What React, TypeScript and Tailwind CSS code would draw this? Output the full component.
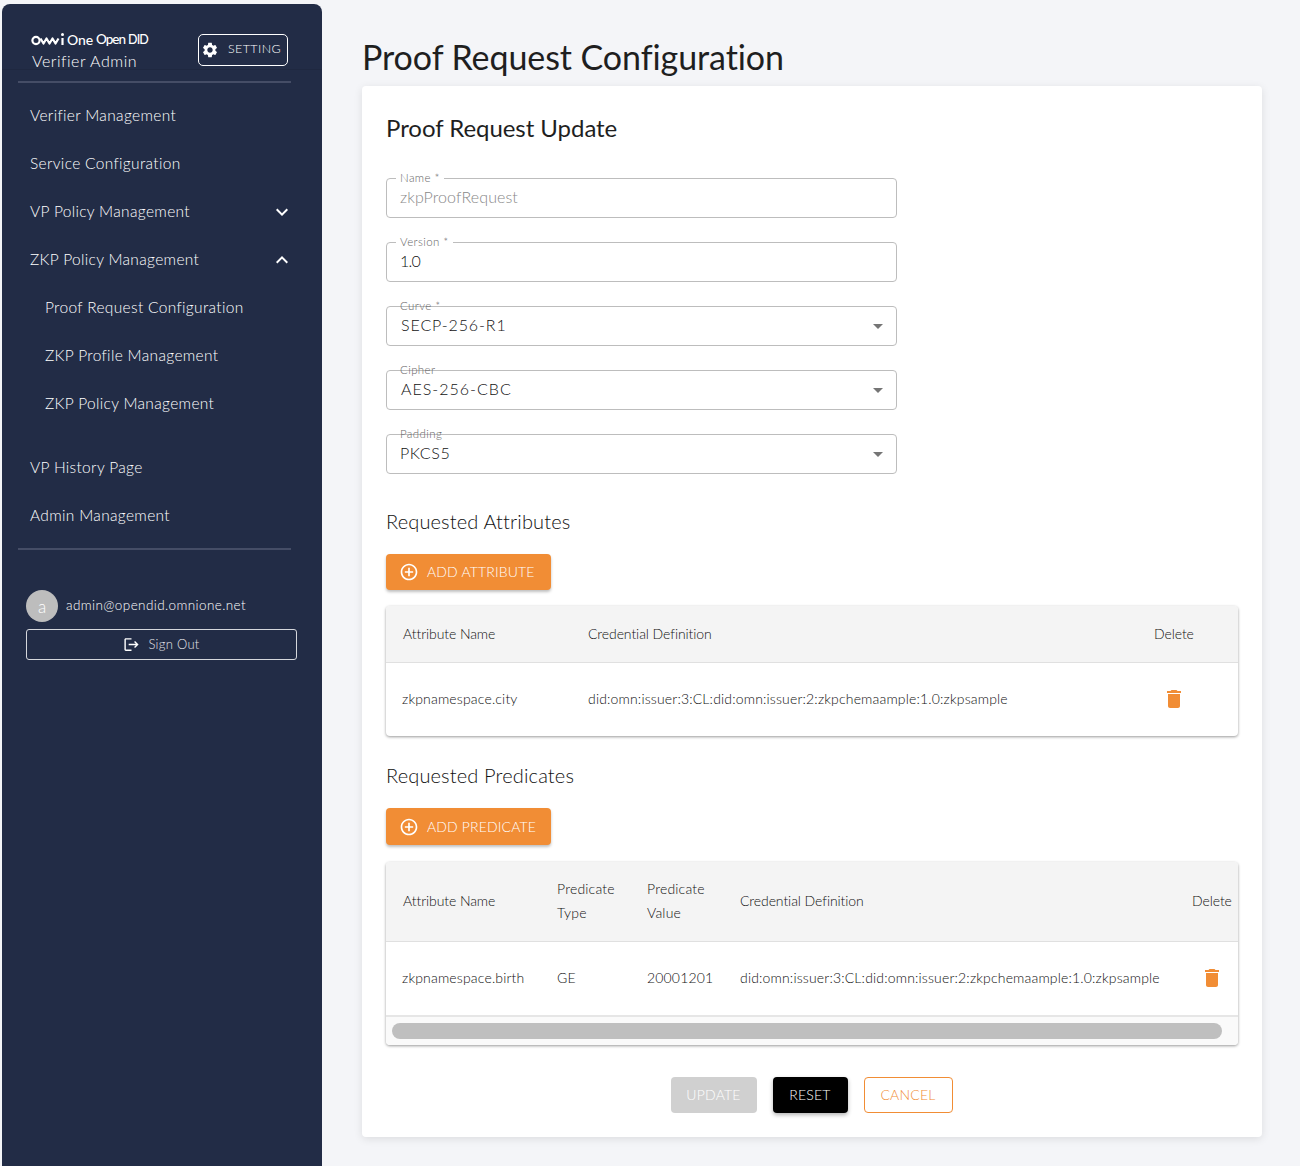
import React from "react";

const Gear = () => (
  <svg viewBox="0 0 24 24" className="w-[18px] h-[18px] fill-white shrink-0">
    <path d="M19.14 12.94c.04-.3.06-.61.06-.94 0-.32-.02-.64-.07-.94l2.03-1.58c.18-.14.23-.41.12-.61l-1.92-3.32c-.12-.22-.37-.29-.59-.22l-2.39.96c-.5-.38-1.03-.7-1.62-.94l-.36-2.54c-.04-.24-.24-.41-.48-.41h-3.84c-.24 0-.43.17-.47.41l-.36 2.54c-.59.24-1.13.57-1.62.94l-2.39-.96c-.22-.08-.47 0-.59.22L2.74 8.87c-.12.21-.08.47.12.61l2.03 1.58c-.05.3-.09.63-.09.94s.02.64.07.94l-2.03 1.58c-.18.14-.23.41-.12.61l1.92 3.32c.12.22.37.29.59.22l2.39-.96c.5.38 1.03.7 1.62.94l.36 2.54c.05.24.24.41.48.41h3.84c.24 0 .44-.17.47-.41l.36-2.54c.59-.24 1.13-.56 1.62-.94l2.39.96c.22.08.47 0 .59-.22l1.92-3.32c.12-.22.07-.47-.12-.61l-2.01-1.58zM12 15.6c-1.98 0-3.6-1.62-3.6-3.6s1.62-3.6 3.6-3.6 3.6 1.62 3.6 3.6-1.62 3.6-3.6 3.6z" />
  </svg>
);
const Chevron = ({ up }: { up?: boolean }) => (
  <svg viewBox="0 0 24 24" className="w-6 h-6 fill-white">
    <path d={up ? "M7.41 15.41 12 10.83l4.59 4.58L18 14l-6-6-6 6z" : "M7.41 8.59 12 13.17l4.59-4.58L18 10l-6 6-6-6z"} />
  </svg>
);
const Trash = () => (
  <svg viewBox="0 0 24 24" className="w-6 h-6 fill-[#f18d35]">
    <path d="M6 19c0 1.1.9 2 2 2h8c1.1 0 2-.9 2-2V7H6v12zM19 4h-3.5l-1-1h-5l-1 1H5v2h14V4z" />
  </svg>
);
const PlusCircle = () => (
  <svg viewBox="0 0 24 24" className="w-5 h-5 fill-white shrink-0">
    <path d="M13 7h-2v4H7v2h4v4h2v-4h4v-2h-4V7zm-1-5C6.48 2 2 6.48 2 12s4.48 10 10 10 10-4.48 10-10S17.52 2 12 2zm0 18c-4.41 0-8-3.59-8-8s3.59-8 8-8 8 3.59 8 8-3.59 8-8 8z" />
  </svg>
);
const Logout = () => (
  <svg viewBox="0 0 24 24" className="w-[17px] h-[17px] fill-white shrink-0">
    <path d="M17 7l-1.41 1.41L18.17 11H8v2h10.17l-2.58 2.58L17 17l5-5zM4 5h8V3H4c-1.1 0-2 .9-2 2v14c0 1.1.9 2 2 2h8v-2H4V5z" />
  </svg>
);
const OmniMark = () => (
  <svg viewBox="0 0 34 13" className="w-[34px] h-[13px] shrink-0" fill="none" stroke="#fff" strokeWidth="2.2">
    <circle cx="5" cy="7.5" r="3.6" />
    <path d="M9.5 5.5 12.5 10.5 15.5 5.5 18.5 10.5 21.5 5.5 24.5 10.5 27.5 5.5" strokeLinejoin="round" />
    <path d="M31.5 5v7" />
    <circle cx="31.5" cy="1.6" r="1.5" fill="#fff" stroke="none" />
  </svg>
);

const NavItem = ({ label, sub, icon }: { label: string; sub?: boolean; icon?: React.ReactNode }) => (
  <div className={`h-12 flex items-center justify-between text-[15.5px] font-light text-white tracking-[0.33px] pr-[28px] ${sub ? "pl-[43px]" : "pl-[28px]"}`}>
    <span>{label}</span>
    {icon}
  </div>
);

const Field = ({ label, value, notch, select, disabled, track }: { label: string; value: string; notch?: boolean; select?: boolean; disabled?: boolean; track: string }) => (
  <div className="relative w-[511px] h-10 border border-[#bdbdbd] rounded-[4px] flex items-center justify-between pl-[13px] pr-[6px] bg-white">
    <span className={`absolute left-[9px] -top-[8px] text-[11.5px] leading-[14px] px-[4px] tracking-[0.4px] font-light text-[#666] ${notch ? "bg-white" : ""}`}>{label}</span>
    <span className={`text-[16px] pb-[2px] font-light ${track} ${disabled ? "text-[#888]" : "text-[#111]"}`}>{value}</span>
    {select && (
      <svg viewBox="0 0 24 24" className="w-6 h-6 fill-[#757575]">
        <path d="M7 10l5 5 5-5z" />
      </svg>
    )}
  </div>
);

const AddButton = ({ label, tall }: { label: string; tall?: boolean }) => (
  <div className={`${tall ? "h-[37px]" : "h-9"} w-[165px] bg-[#f18d35] rounded-[4px] shadow-[0_2px_3px_rgba(0,0,0,0.25)] flex items-center pl-[13px] gap-[8px] text-white text-[14px] tracking-[0.15px] font-light`}>
    <PlusCircle />
    <span className="pb-[1px]">{label}</span>
  </div>
);

export default function App() {
  return (
    <div className="min-h-[1166px] bg-[#f4f5f8] flex items-stretch pl-[2px] pt-[4px] font-['Lato','Liberation_Sans',sans-serif] text-[#111]">
      <aside className="w-[320px] shrink-0 bg-[#222c46] rounded-t-[8px] flex flex-col">
        <div className="h-[66px] border-b border-[#1f2840] flex items-start justify-between pl-[29px] pr-[34px] pt-[30px]">
          <div className="flex flex-col text-white">
            <div className="flex items-center gap-[2px] h-[13px] mt-[-1px]">
              <OmniMark />
              <span className="text-[14px] leading-[13px] font-medium tracking-[-0.1px]">One</span>
              <span className="text-[13.5px] leading-[13px] font-medium tracking-[-1px] ml-[1px]">Open</span>
              <span className="text-[12.5px] leading-[13px] font-medium tracking-[-0.9px] ml-[1px]">DID</span>
            </div>
            <div className="text-[16px] leading-[20px] tracking-[0.52px] font-light text-white mt-[5px] ml-[1px]">Verifier Admin</div>
          </div>
          <div className="h-[32px] w-[90px] border border-white rounded-[5px] flex items-center pl-[2px] gap-[9px] text-white text-[12.5px] font-light tracking-[0.4px] shrink-0">
            <Gear />
            <span className="pb-[1px]">SETTING</span>
          </div>
        </div>
        <div className="h-[2px] bg-[#454d66] mt-[11px] ml-[16px] mr-[31px]" />
        <nav className="pt-[9px] pb-[8px]">
          <NavItem label="Verifier Management" />
          <NavItem label="Service Configuration" />
          <NavItem label="VP Policy Management" icon={<Chevron />} />
          <NavItem label="ZKP Policy Management" icon={<Chevron up />} />
          <NavItem label="Proof Request Configuration" sub />
          <NavItem label="ZKP Profile Management" sub />
          <NavItem label="ZKP Policy Management" sub />
          <div className="h-4" />
          <NavItem label="VP History Page" />
          <NavItem label="Admin Management" />
        </nav>
        <div className="h-[2px] bg-[#454d66] ml-[16px] mr-[31px]" />
        <div className="pl-[24px] pr-[25px] pt-[40px]">
          <div className="flex items-center gap-2">
            <div className="w-8 h-8 rounded-full bg-[#bdbdbd] text-white flex items-center justify-center text-[17px] pt-[2px] font-light">a</div>
            <span className="text-[13.5px] pb-[2px] font-light text-white tracking-[0.4px]">admin@opendid.omnione.net</span>
          </div>
          <div className="mt-[7px] h-[31px] border border-[#d5d7dc] rounded-[3px] flex items-center justify-center gap-[8px] text-[13px] font-light text-[#e2e4e8] tracking-[0.3px]">
            <Logout />
            <span>Sign Out</span>
          </div>
        </div>
      </aside>

      <main className="ml-[40px] w-[900px]">
        <h1 className="text-[34px] leading-[44px] font-normal tracking-[-0.08px] text-[#1f1f1f] mt-[31px] mb-[7px]">Proof Request Configuration</h1>
        <div className="bg-white rounded-[4px] shadow-[0_2px_8px_rgba(0,0,0,0.1)] p-6 h-[1051px]">
          <h2 className="text-[24px] leading-[36px] h-[36px] font-normal tracking-[-0.05px] text-[#1f1f1f]">Proof Request Update</h2>
          <div className="flex flex-col gap-6 mt-[32px]">
            <Field label="Name *" value="zkpProofRequest" notch disabled track="tracking-[0.1px]" />
            <Field label="Version *" value="1.0" notch track="tracking-[-0.8px]" />
            <Field label="Curve *" value="SECP-256-R1" select track="tracking-[0.9px] ml-[1px]" />
            <Field label="Cipher" value="AES-256-CBC" select track="tracking-[1px] ml-[1px]" />
            <Field label="Padding" value="PKCS5" select track="tracking-[0.6px]" />
          </div>

          <h3 className="text-[20px] leading-[28px] mt-[33px] tracking-[0.15px] font-light">Requested Attributes</h3>
          <div className="mt-[19px]"><AddButton label="ADD ATTRIBUTE" /></div>

          <div className="mt-4 rounded-[4px] shadow-[0_1px_3px_rgba(0,0,0,0.4)] text-[14px] font-light overflow-hidden">
            <div className="grid grid-cols-[186px_566px_100px] h-[57px] pb-[2px] items-center bg-[#f4f4f4] border-b border-[#e0e0e0] tracking-[-0.08px]">
              <span className="pl-[17px]">Attribute Name</span>
              <span className="pl-4">Credential Definition</span>
              <span className="pl-4">Delete</span>
            </div>
            <div className="grid grid-cols-[186px_566px_100px] h-[73px] pb-[2px] items-center tracking-[0.17px]">
              <span className="pl-4">zkpnamespace.city</span>
              <span className="pl-4 whitespace-nowrap">did:omn:issuer:3:CL:did:omn:issuer:2:zkpchemaample:1.0:zkpsample</span>
              <span className="pl-[24px]"><Trash /></span>
            </div>
          </div>

          <h3 className="text-[20px] leading-[28px] mt-[25px] tracking-[0.15px] font-light">Requested Predicates</h3>
          <div className="mt-[19px]"><AddButton label="ADD PREDICATE" tall /></div>

          <div className="mt-[17px] rounded-[4px] shadow-[0_1px_3px_rgba(0,0,0,0.4)] text-[14px] font-light overflow-hidden">
            <div className="grid grid-cols-[155px_90px_93px_452px_62px] h-[80px] pb-[2px] items-center bg-[#f4f4f4] border-b border-[#e0e0e0] leading-[24px] tracking-[-0.08px]">
              <span className="pl-[17px]">Attribute Name</span>
              <span className="pl-4 tracking-[0.2px]">Predicate<br />Type</span>
              <span className="pl-4 tracking-[0.2px]">Predicate<br />Value</span>
              <span className="pl-4">Credential Definition</span>
              <span className="pl-4">Delete</span>
            </div>
            <div className="grid grid-cols-[155px_90px_93px_452px_62px] h-[73px] pb-[2px] items-center tracking-[0.17px]">
              <span className="pl-4">zkpnamespace.birth</span>
              <span className="pl-4">GE</span>
              <span className="pl-4">20001201</span>
              <span className="pl-4 whitespace-nowrap">did:omn:issuer:3:CL:did:omn:issuer:2:zkpchemaample:1.0:zkpsample</span>
              <span className="pl-[24px]"><Trash /></span>
            </div>
            <div className="h-[30px] bg-[#fafafa] border-t-[2px] border-[#e6e6e6] pl-[6px] pr-[16px] pt-[6px]">
              <div className="h-4 rounded-full bg-[#bfbfbf]" />
            </div>
          </div>

          <div className="flex justify-center gap-4 mt-[32px] text-[14px] tracking-[0.2px] font-light pr-[1px]">
            <div className="h-9 w-[86px] pb-[2px] rounded-[4px] bg-[#d0d0d0] text-white flex items-center justify-center">UPDATE</div>
            <div className="h-9 w-[75px] pb-[2px] rounded-[4px] bg-black text-white flex items-center justify-center shadow-[0_2px_4px_rgba(0,0,0,0.3)]">RESET</div>
            <div className="h-9 w-[89px] pb-[2px] rounded-[4px] border border-[#f18d35] text-[#f18d35] flex items-center justify-center">CANCEL</div>
          </div>
        </div>
      </main>
    </div>
  );
}
